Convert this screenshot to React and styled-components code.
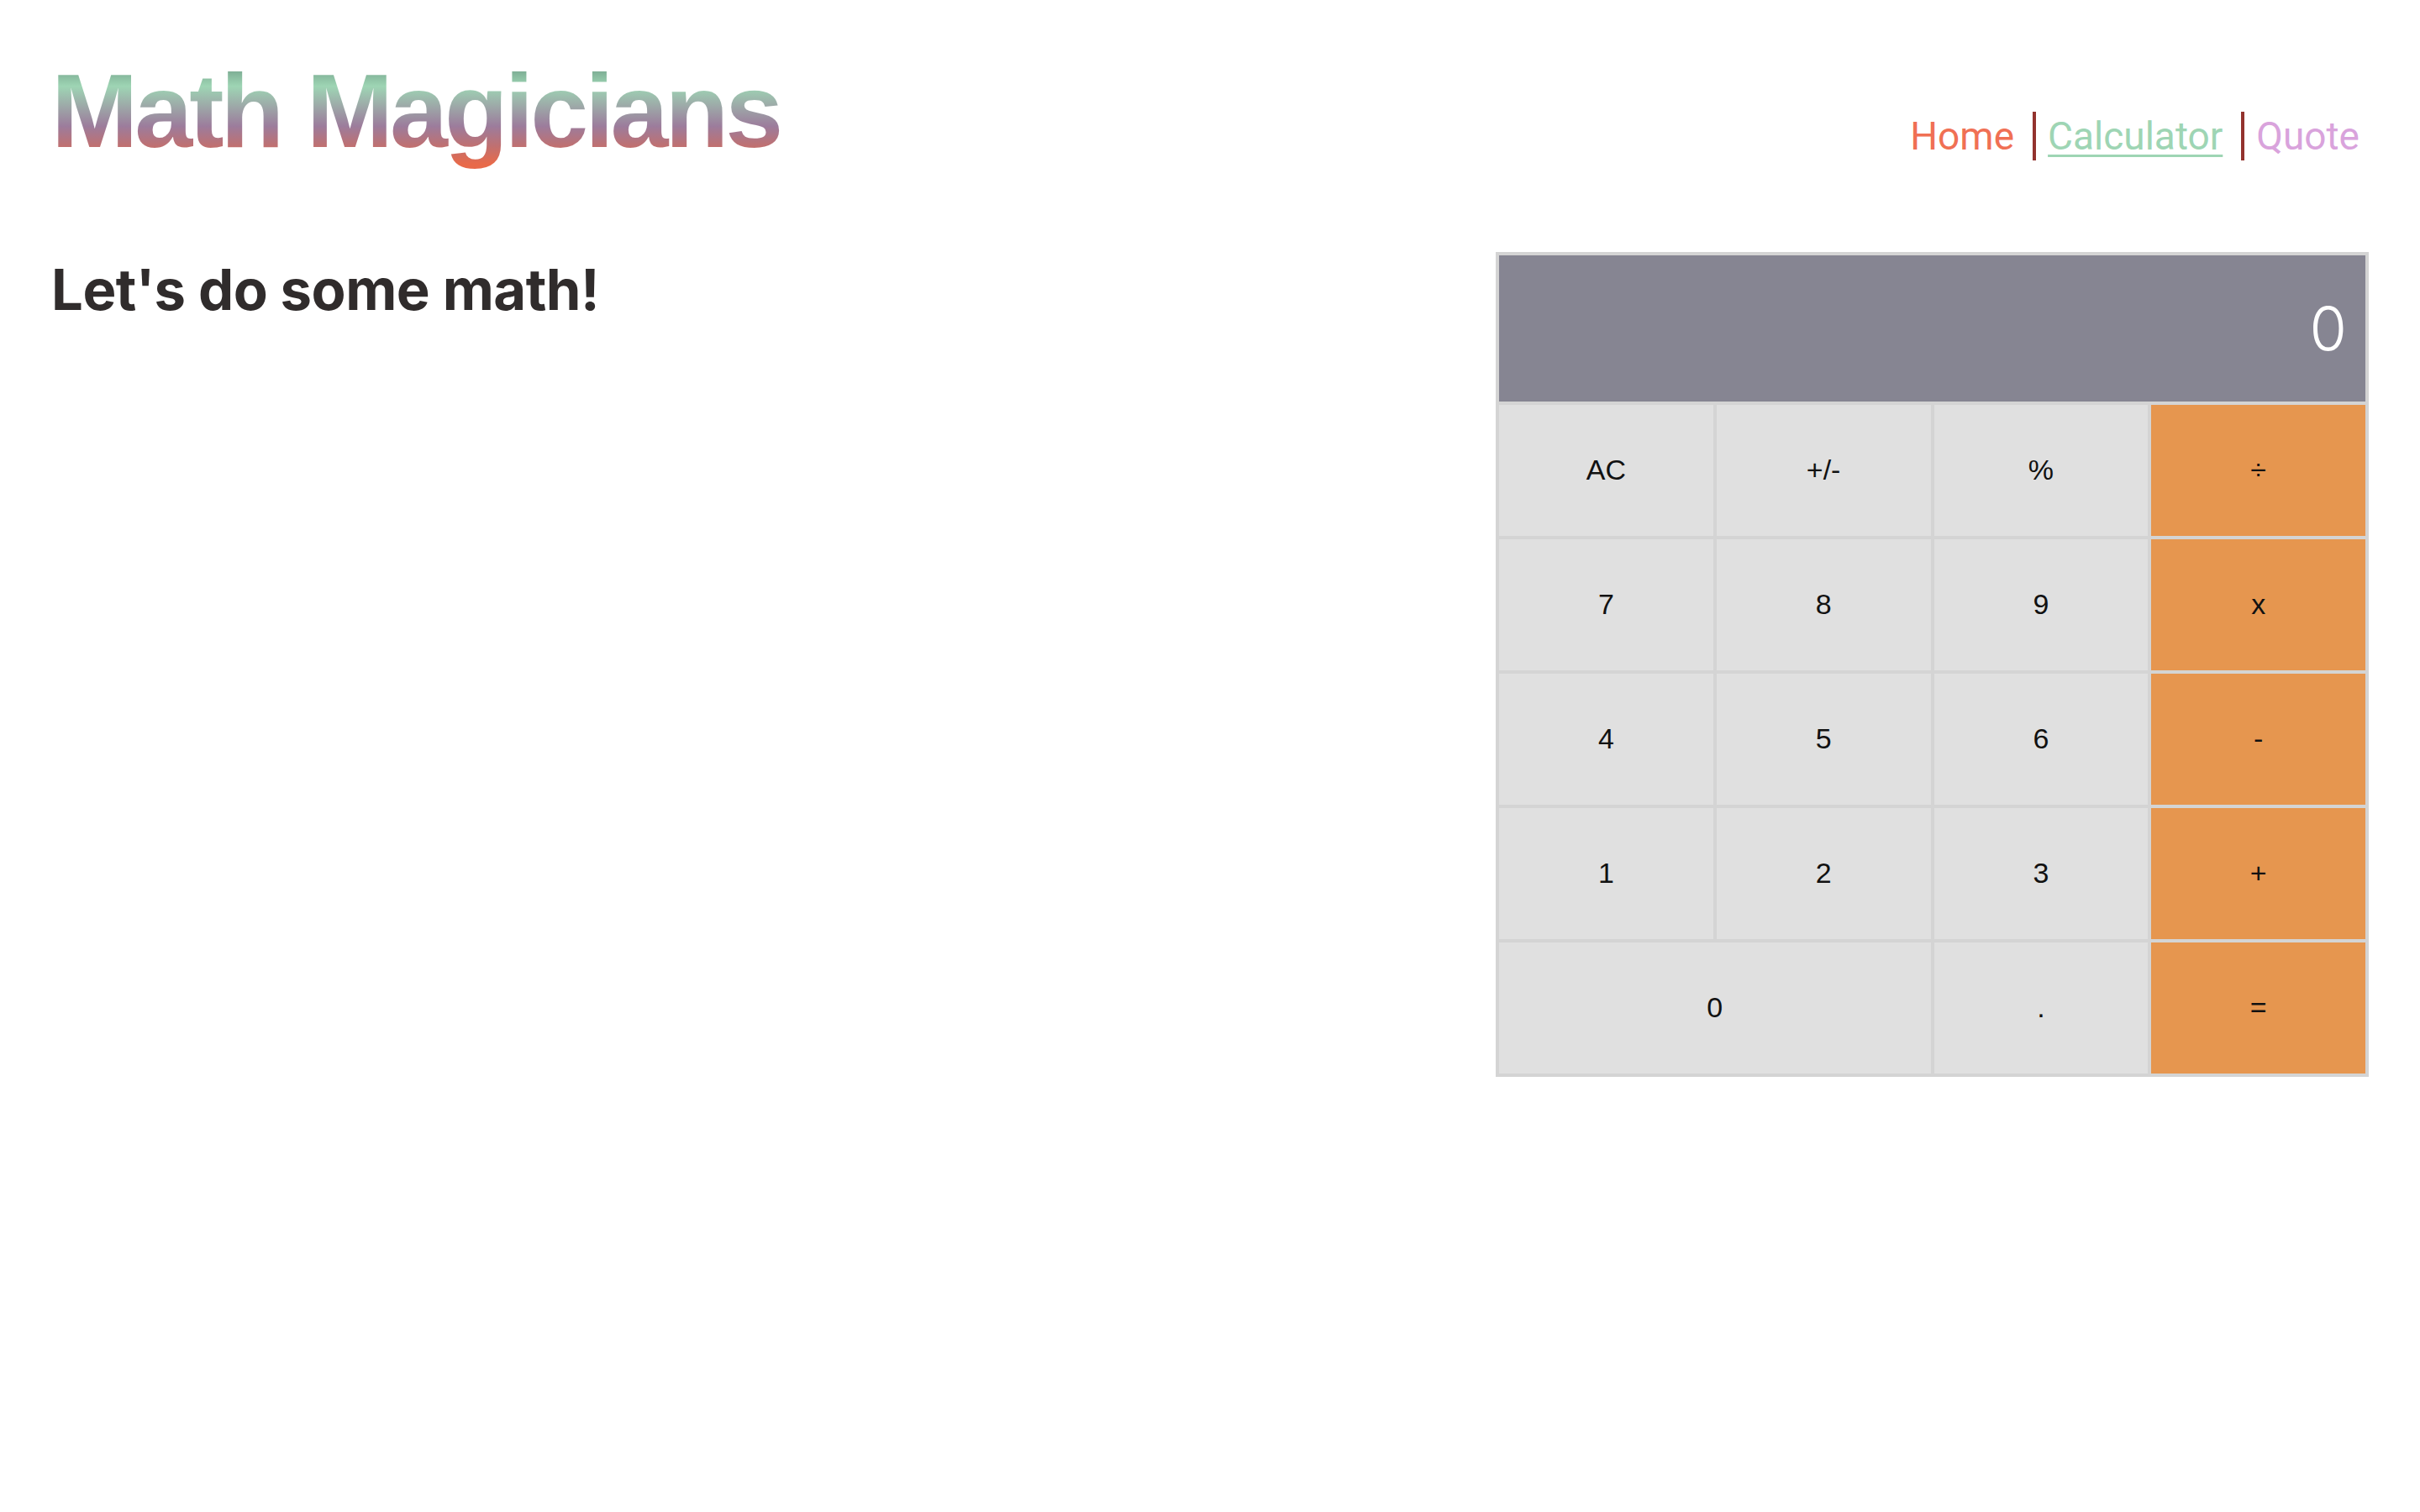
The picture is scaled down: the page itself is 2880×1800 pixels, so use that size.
import styled, { createGlobalStyle } from "styled-components";

const GlobalStyle = createGlobalStyle`
  body {
    margin: 0;
    background: #fff;
    font-family: Inter, "Noto Sans", sans-serif;
  }
`;

const Page = styled.div`
  padding: 0 61px;
`;

const Header = styled.header`
  display: flex;
  justify-content: space-between;
  align-items: flex-end;
  padding-top: 58px;
`;

const Title = styled.h1`
  margin: 0;
  font-family: "Liberation Sans", Arial, sans-serif;
  font-size: 124px;
  font-weight: 700;
  line-height: 1.2;
  letter-spacing: -4px;
  background: linear-gradient(
    to bottom,
    #6f9c86 12%,
    #9ed5b4 30%,
    #9c7c9c 62%,
    #c07070 78%,
    #e86a4a 92%
  );
  -webkit-background-clip: text;
  background-clip: text;
  color: transparent;
`;

const Nav = styled.nav`
  display: flex;
  align-items: center;
  padding-bottom: 16px;
`;

const NavLink = styled.a`
  font-family: Roboto, "Noto Sans", sans-serif;
  font-size: 46px;
  line-height: 58px;
  color: ${(p) => p.$color};
  text-decoration: ${(p) => (p.$active ? "underline" : "none")};
  text-decoration-thickness: 3px;
  text-underline-offset: 6px;
  padding: 0 22px 0 ${(p) => (p.$first ? "0" : "14px")};
  border-left: ${(p) => (p.$first ? "none" : "4px solid #93332e")};
  &:last-child {
    padding-right: 11px;
  }
`;

const Main = styled.main`
  display: flex;
  justify-content: space-between;
  align-items: flex-start;
  padding-top: 93px;
`;

const Heading = styled.h2`
  margin: 0;
  padding-top: 4px;
  font-size: 67px;
  font-weight: 700;
  letter-spacing: -0.5px;
  color: #302c2c;
`;

const Calculator = styled.div`
  width: 1039px;
  display: grid;
  grid-template-columns: repeat(4, 1fr);
  grid-template-rows: 178px repeat(5, 160px);
  border: 2px solid #d4d4d4;
  box-sizing: border-box;
`;

const Display = styled.div`
  grid-column: span 4;
  box-sizing: border-box;
  background: #868592;
  border: 2px solid #d4d4d4;
  display: flex;
  align-items: center;
  justify-content: flex-end;
  padding-right: 22px;
  font-family: Inter, "Noto Sans", sans-serif;
  font-weight: 300;
  font-size: 72px;
  color: #fff;
`;

const Key = styled.button`
  grid-column: span ${(p) => p.$span || 1};
  border: 2px solid #d4d4d4;
  background: ${(p) => (p.$op ? "#e6964f" : "#e0e0e0")};
  font-family: "Liberation Sans", Arial, sans-serif;
  font-size: 34px;
  color: #111;
  padding: 0;
  margin: 0;
`;

const keys = [
  ["AC"], ["+/-"], ["%"], ["÷", true],
  ["7"], ["8"], ["9"], ["x", true],
  ["4"], ["5"], ["6"], ["-", true],
  ["1"], ["2"], ["3"], ["+", true],
];

export default function App() {
  return (
    <Page>
      <GlobalStyle />
      <Header>
        <Title>Math Magicians</Title>
        <Nav>
          <NavLink $first $color="#f07054" href="#">Home</NavLink>
          <NavLink $active $color="#9ed5b4" href="#">Calculator</NavLink>
          <NavLink $color="#d9a3dc" href="#">Quote</NavLink>
        </Nav>
      </Header>
      <Main>
        <Heading>Let&apos;s do some math!</Heading>
        <Calculator>
          <Display>0</Display>
          {keys.map(([label, op]) => (
            <Key key={label} $op={op}>{label}</Key>
          ))}
          <Key $span={2}>0</Key>
          <Key>.</Key>
          <Key $op>=</Key>
        </Calculator>
      </Main>
    </Page>
  );
}
